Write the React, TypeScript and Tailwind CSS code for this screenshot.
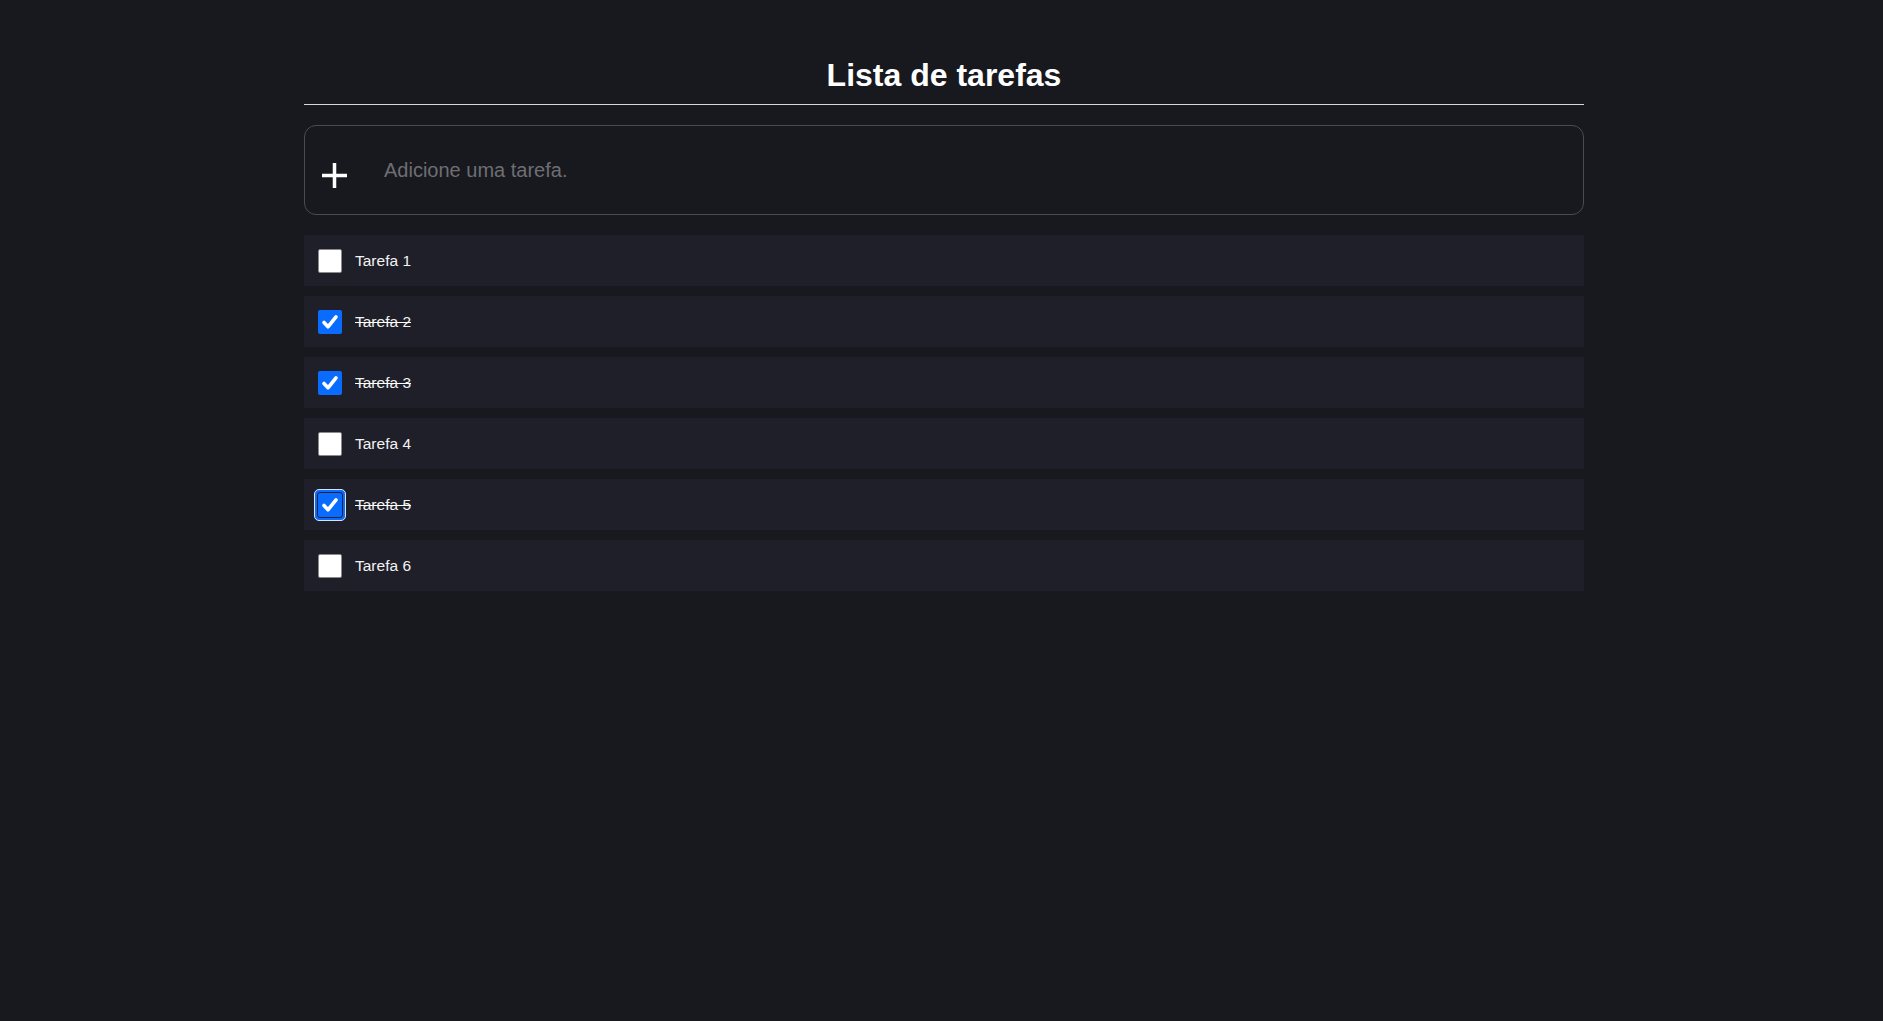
import { FC } from 'react';

type Task = { id: number; title: string; done: boolean; focused?: boolean };

const tasks: Task[] = [
  { id: 1, title: 'Tarefa 1', done: false },
  { id: 2, title: 'Tarefa 2', done: true },
  { id: 3, title: 'Tarefa 3', done: true },
  { id: 4, title: 'Tarefa 4', done: false },
  { id: 5, title: 'Tarefa 5', done: true, focused: true },
  { id: 6, title: 'Tarefa 6', done: false },
];

const Check: FC = () => (
  <svg width="18" height="18" viewBox="0 0 18 18" fill="none">
    <path d="M3 9.5 L7 13.8 L15 3.8" stroke="white" strokeWidth="3.6" strokeLinecap="round" strokeLinejoin="round" />
  </svg>
);

const Checkbox: FC<{ checked: boolean; focused?: boolean }> = ({ checked, focused }) => {
  if (!checked) {
    return <span className="block w-6 h-6 rounded-[2px] border border-[#8a8a8a] bg-white" />;
  }
  if (focused) {
    return (
      <span className="-m-1 flex w-8 h-8 items-center justify-center rounded-[5px] border border-[#d6e4ff] bg-[#0a6cff] p-[2px]">
        <span className="flex w-[26px] h-[26px] items-center justify-center rounded-[3px] border border-[#1d2230] bg-[#0a6cff]">
          <Check />
        </span>
      </span>
    );
  }
  return (
    <span className="flex w-6 h-6 items-center justify-center rounded-[2px] bg-[#0a6cff]">
      <Check />
    </span>
  );
};

const App: FC = () => {
  return (
    <div className="min-h-screen bg-[#18191f] pl-[5px] font-['Liberation_Sans',Arial,sans-serif] text-[#f2f2f2]">
      <main className="w-[1280px] mx-auto">
        <h1 className="pt-[57px] pb-[10px] border-b border-[#d8d8d8] text-center text-[32px] leading-[37px] font-bold text-white">
          Lista de tarefas
        </h1>

        <div className="mt-5 h-[90px] flex items-center rounded-xl border border-[#4a4b52] pl-[16px]">
          <svg className="mt-[11px] shrink-0" width="27" height="27" viewBox="0 0 27 27">
            <path d="M13.5 1 V26 M1 13.5 H26" stroke="white" strokeWidth="3.5" />
          </svg>
          <input
            className="ml-9 flex-1 bg-transparent text-[20px] text-white placeholder:text-[#6e6e73] outline-none"
            placeholder="Adicione uma tarefa."
          />
        </div>

        <ul className="mt-5 flex flex-col gap-[10px]">
          {tasks.map((t) => (
            <li key={t.id} className="h-[51px] flex items-center bg-[#1f1f29] pl-[14px]">
              <Checkbox checked={t.done} focused={t.focused} />
              <span className={`ml-[13px] text-[15.5px] ${t.done ? 'line-through decoration-white' : ''}`}>
                {t.title}
              </span>
            </li>
          ))}
        </ul>
      </main>
    </div>
  );
};

export default App;
